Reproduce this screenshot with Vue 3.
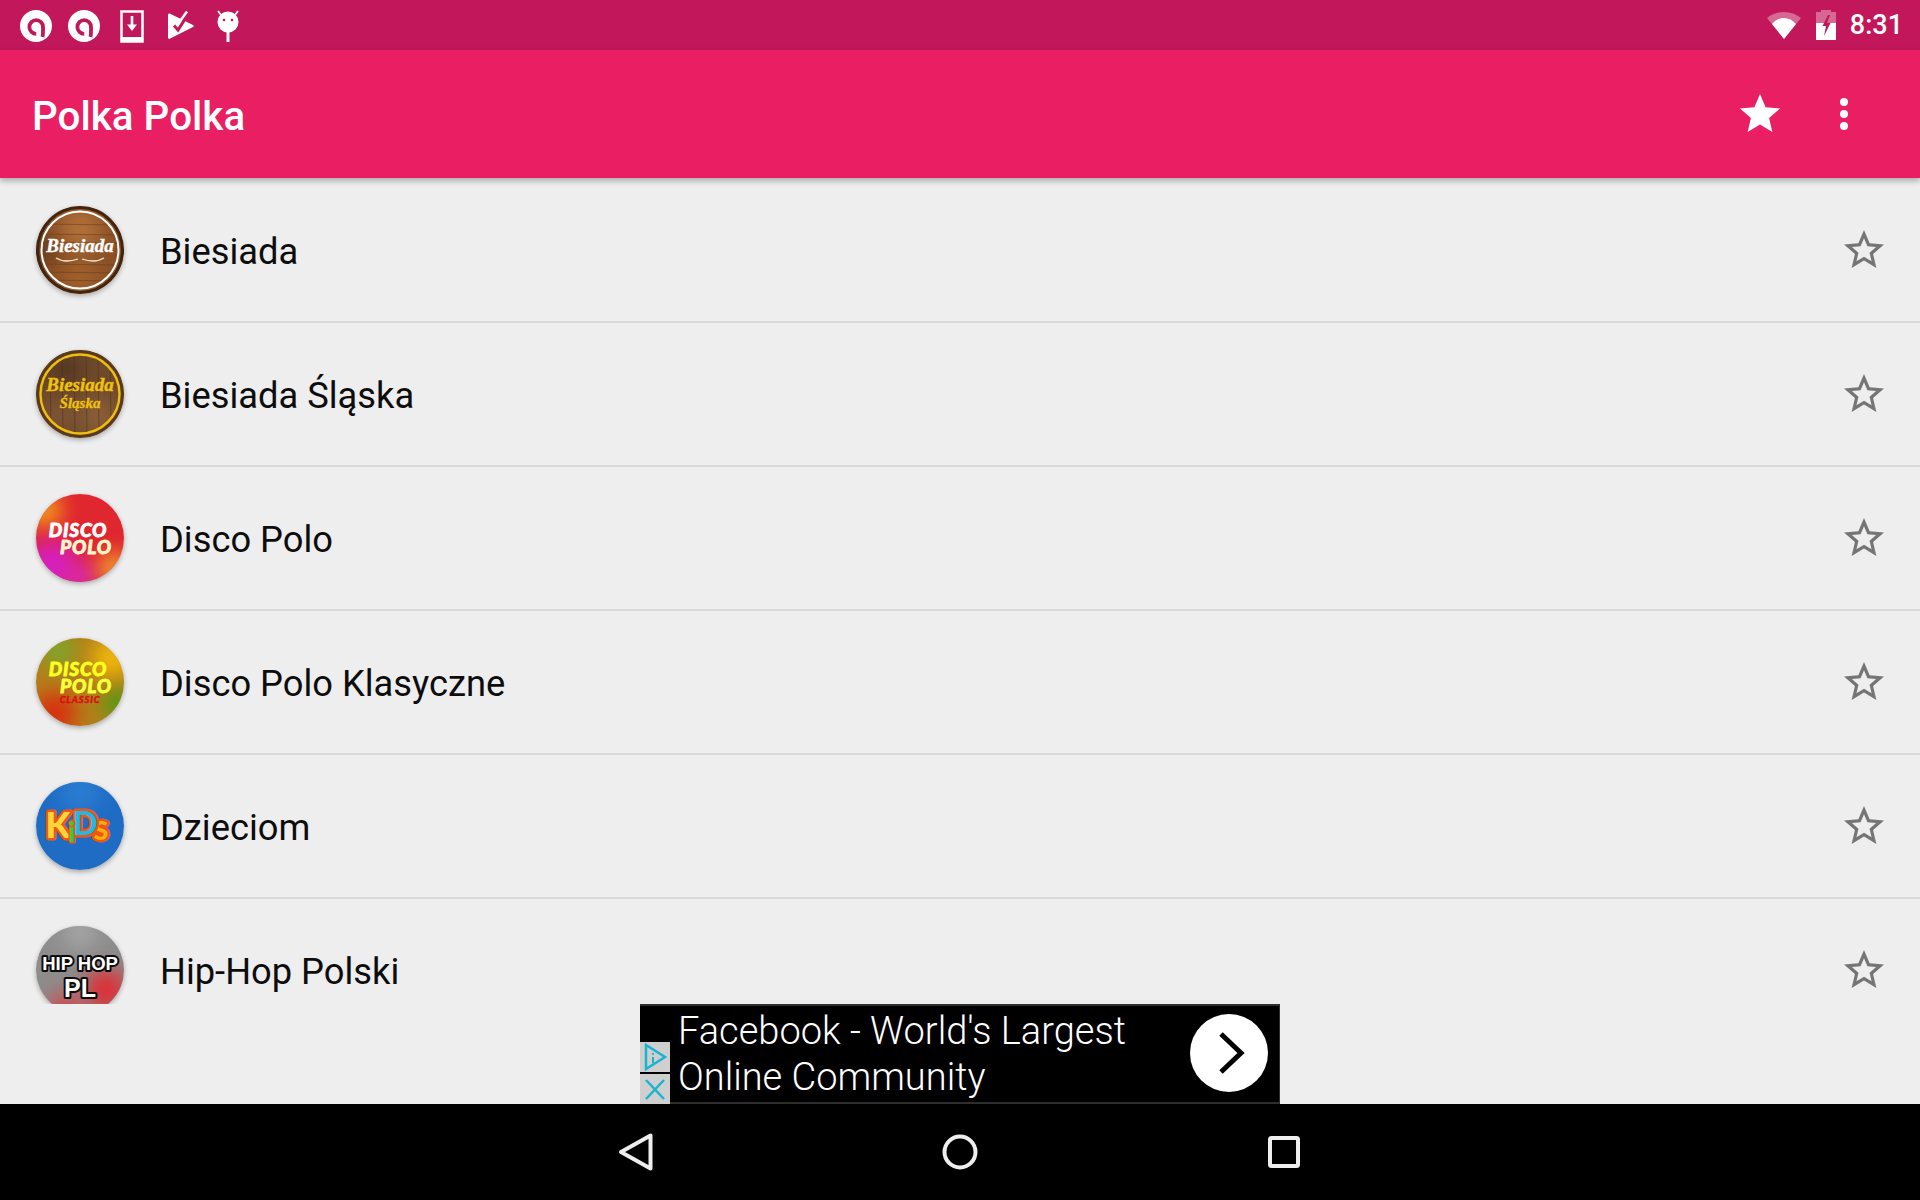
<script setup>
const starOutline =
  'M22 9.24l-7.19-.62L12 2 9.19 8.63 2 9.24l5.46 4.73L5.82 21 12 17.27 18.18 21l-1.63-7.03L22 9.24zM12 15.4l-3.76 2.27 1-4.28-3.32-2.88 4.38-.38L12 6.1l1.71 4.04 4.38.38-3.32 2.88 1 4.28L12 15.4z'
const starFilled =
  'M12 17.27L18.18 21l-1.64-7.03L22 9.24l-7.19-.61L12 2 9.19 8.63 2 9.24l5.46 4.73L5.82 21z'

const stations = [
  {
    name: 'Biesiada',
    base: '#8a5026',
    blobs: [
      { cx: 44, cy: 24, r: 22, fill: '#b0703a' },
      { cx: 44, cy: 70, r: 20, fill: '#a0602c' },
      { cx: 6, cy: 44, r: 12, fill: '#5d3317' },
    ],
    planks: [18, 28, 36, 58, 66, 74].map((y) => ({ x1: 0, y1: y, x2: 88, y2: y + 1, stroke: '#6b3b19' })),
    rings: [
      { r: 42.5, stroke: '#3f2512', width: 3 },
      { r: 38.5, stroke: '#ffffff', width: 2 },
    ],
    flourish: 'M20 52c8 5 16 3 22 1M68 52c-8 5-16 3-22 1',
    flourishColor: '#f4e8dc',
    labels: [{ text: 'Biesiada', x: 44, y: 46, size: 19, fill: '#fff', sw: 0.4, cls: 'script' }],
  },
  {
    name: 'Biesiada Śląska',
    base: '#6f4a2b',
    blobs: [
      { cx: 30, cy: 20, r: 14, fill: '#4c3220' },
      { cx: 62, cy: 66, r: 20, fill: '#8a5f39' },
      { cx: 22, cy: 66, r: 14, fill: '#83593a' },
    ],
    planks: [14, 26, 38, 50, 62, 74].map((x) => ({ x1: x, y1: 0, x2: x + 1, y2: 88, stroke: '#4d311d' })),
    rings: [
      { r: 42.5, stroke: '#5a3a1c', width: 3 },
      { r: 39.5, stroke: '#eebf0c', width: 2.4 },
    ],
    labels: [
      { text: 'Biesiada', x: 44, y: 41, size: 19, fill: '#efc20c', sw: 0.4, cls: 'script' },
      { text: 'Śląska', x: 44, y: 58, size: 15, fill: '#efc20c', sw: 0.3, cls: 'script' },
    ],
  },
  {
    name: 'Disco Polo',
    base: '#e0262f',
    blobs: [
      { cx: 8, cy: 16, r: 18, fill: '#f09a1c' },
      { cx: 16, cy: 72, r: 26, fill: '#d61fc0' },
      { cx: 44, cy: 84, r: 16, fill: '#d92bb0' },
      { cx: 78, cy: 74, r: 16, fill: '#f0a030' },
    ],
    labels: [
      { text: 'DISCO', x: 42, y: 43, size: 19, fill: '#fff', sw: 0.8, cls: 'heavy' },
      { text: 'POLO', x: 50, y: 60, size: 19, fill: '#fff7c8', sw: 0.8, cls: 'heavy' },
    ],
  },
  {
    name: 'Disco Polo Klasyczne',
    base: '#b4801a',
    blobs: [
      { cx: 22, cy: 12, r: 18, fill: '#7fa52c' },
      { cx: 76, cy: 20, r: 20, fill: '#f0b80c' },
      { cx: 18, cy: 76, r: 22, fill: '#d8300f' },
      { cx: 82, cy: 66, r: 14, fill: '#3ea012' },
    ],
    labels: [
      { text: 'DISCO', x: 42, y: 38, size: 19, fill: '#ffff1e', sw: 0.8, cls: 'heavy' },
      { text: 'POLO', x: 50, y: 55, size: 19, fill: '#f6ff3c', sw: 0.8, cls: 'heavy' },
      { text: 'CLASSIC', x: 44, y: 65, size: 9.5, fill: '#d81010', sw: 0.4, cls: 'heavy' },
    ],
  },
  {
    name: 'Dzieciom',
    base: '#1f6cc4',
    blobs: [{ cx: 44, cy: 10, r: 20, fill: '#2a7ed2' }],
    labels: [
      { text: 'K', x: 22, y: 56, size: 36, fill: '#ffd63a', stroke: '#f0560f', sw: 5, cls: 'kids' },
      { text: 'S', x: 65, y: 58, size: 27, fill: '#ffb010', stroke: '#f0560f', sw: 5, cls: 'kids' },
      { text: 'D', x: 49, y: 53, size: 33, fill: '#20b8ea', stroke: '#f0560f', sw: 5, cls: 'kids' },
      { text: 'i', x: 36, y: 60, size: 28, fill: '#39c83c', stroke: '#f0560f', sw: 3, cls: 'kids' },
    ],
  },
  {
    name: 'Hip-Hop Polski',
    base: '#8d8d8d',
    blobs: [
      { cx: 44, cy: 6, r: 18, fill: '#a4a4a4' },
      { cx: 70, cy: 64, r: 22, fill: '#dc3036' },
      { cx: 30, cy: 84, r: 18, fill: '#d2474a' },
    ],
    labels: [
      { text: 'HIP HOP', x: 44, y: 44, size: 18.5, fill: '#fff', stroke: '#0c0c0c', sw: 4, cls: 'tag' },
      { text: 'PL', x: 44, y: 71, size: 25, fill: '#fff', stroke: '#0c0c0c', sw: 4, cls: 'tag' },
    ],
  },
]
</script>

<template>
  <div class="screen">
    <header class="status-bar">
      <div class="status-icons">
        <svg v-for="n in 2" :key="n" class="status-icon" viewBox="0 0 48 48">
          <circle cx="24" cy="25" r="16" fill="#fff" />
          <path
            d="M30.500 36c.8-3 .5-6 .5-10a6.800 6.800 0 1 0-6.800 6.800"
            fill="none"
            stroke="#c2185b"
            stroke-width="3.800"
          />
        </svg>
        <svg class="status-icon" viewBox="0 0 48 48">
          <path d="M13.500 10.500h21v30h-21z" fill="none" stroke="#fff" stroke-width="2.500" />
          <path d="M13 36h22v5H13z" fill="#fff" />
          <path d="M22.700 15h2.600v8.500H29L24 30l-5-6.500h3.700z" fill="#fff" />
        </svg>
        <svg class="status-icon" viewBox="0 0 48 48">
          <path
            d="M12 14c0-1.500 1-2 2.200-1.300L37 24c1 .6 1 1.500 0 2L14.200 37.600C13 38.300 12 37.800 12 36.500z"
            fill="#fff"
          />
          <path d="M18 24.500l4 4.500 9-14" fill="none" stroke="#c2185b" stroke-width="3" />
          <path d="M22 11l1 5 6-6 3 5-6 6" fill="#c2185b" />
          <path d="M24.500 19.500l6.500-9" fill="none" stroke="#fff" stroke-width="2.500" />
        </svg>
        <svg class="status-icon" viewBox="0 0 48 48">
          <circle cx="24" cy="21" r="10.500" fill="#fff" />
          <path d="M22.500 30h3v11h-3z" fill="#fff" />
          <path d="M17 14l-3-4M31 14l3-4" stroke="#fff" stroke-width="1.800" />
          <circle cx="20" cy="19" r="1.300" fill="#c2185b" />
          <circle cx="28" cy="19" r="1.300" fill="#c2185b" />
        </svg>
      </div>
      <div class="status-right">
        <svg class="wifi" viewBox="0 0 36 30">
          <path d="M18 29L1 8C6 4 11.500 2 18 2s12 2 17 6z" fill="#fff" fill-opacity=".35" />
          <path d="M18 29L6 14C9.500 10 13.500 8 18 8s8.500 2 12 6z" fill="#fff" />
        </svg>
        <svg class="battery" viewBox="0 0 20 30">
          <path d="M5 0h10v2h5v11H0V2h5z" fill="#fff" fill-opacity=".35" />
          <path d="M0 13h20v17H0z" fill="#fff" />
          <path d="M12 5L6.500 16H10L8 26l6.500-13H11l3-8z" fill="#c2185b" />
        </svg>
        <span class="clock">8:31</span>
      </div>
    </header>

    <div class="toolbar">
      <h1 class="title">Polka Polka</h1>
      <div class="toolbar-actions">
        <svg class="toolbar-star" viewBox="0 0 24 24"><path :d="starFilled" fill="#fff" /></svg>
        <div class="overflow-menu"><i></i><i></i><i></i></div>
      </div>
    </div>

    <main class="list">
      <div v-for="station in stations" :key="station.name" class="row">
        <svg class="logo" viewBox="0 0 88 88">
          <rect width="88" height="88" :fill="station.base" />
          <circle v-for="(b, i) in station.blobs" :key="i" class="blob" v-bind="b" />
          <line v-for="(p, i) in station.planks" :key="'p' + i" class="plank" v-bind="p" />
          <circle
            v-for="(ring, i) in station.rings"
            :key="'r' + i"
            cx="44"
            cy="44"
            :r="ring.r"
            fill="none"
            :stroke="ring.stroke"
            :stroke-width="ring.width"
          />
          <path
            v-if="station.flourish"
            :d="station.flourish"
            fill="none"
            :stroke="station.flourishColor"
            stroke-width="1.300"
          />
          <text
            v-for="label in station.labels"
            :key="label.text"
            :class="label.cls"
            :x="label.x"
            :y="label.y"
            :font-size="label.size"
            :fill="label.fill"
            :stroke="label.stroke || label.fill"
            :stroke-width="label.sw"
            text-anchor="middle"
          >{{ label.text }}</text>
        </svg>
        <span class="station-name">{{ station.name }}</span>
        <svg class="fav" viewBox="0 0 24 24"><path :d="starOutline" fill="#757575" /></svg>
      </div>
    </main>

    <div class="ad-slot">
      <div class="ad">
        <div class="ad-badges">
          <div class="ad-badge">
            <svg viewBox="0 0 30 30" width="30" height="30">
              <path d="M6 3l19 12L6 27z" fill="none" stroke="#19b5d0" stroke-width="2.500" />
              <path d="M13 11v1.800M13 15v6" stroke="#19b5d0" stroke-width="2" />
            </svg>
          </div>
          <div class="ad-badge">
            <svg viewBox="0 0 30 30" width="30" height="30">
              <path d="M6 6l18 19M24 6L6 25" stroke="#19b5d0" stroke-width="2.500" />
            </svg>
          </div>
        </div>
        <div class="ad-text">Facebook - World's Largest<br />Online Community</div>
        <div class="ad-button">
          <svg viewBox="0 0 78 78" width="78" height="78">
            <path d="M31 20l20 19-20 19" fill="none" stroke="#000" stroke-width="5" />
          </svg>
        </div>
      </div>
    </div>

    <nav class="nav-bar">
      <svg class="nav-icon" viewBox="0 0 48 48">
        <path d="M38.500 7.500v33L9 24z" fill="none" stroke="#eee" stroke-width="4" stroke-linejoin="round" />
      </svg>
      <svg class="nav-icon" viewBox="0 0 48 48">
        <circle cx="24" cy="24" r="15.500" fill="none" stroke="#eee" stroke-width="4" />
      </svg>
      <svg class="nav-icon" viewBox="0 0 48 48">
        <rect x="10" y="10" width="28" height="28" rx="1.500" fill="none" stroke="#eee" stroke-width="4" />
      </svg>
    </nav>
  </div>
</template>

<style scoped>
.screen {
  display: flex;
  flex-direction: column;
  width: 1920px;
  height: 1200px;
  overflow: hidden;
  background: #eeeeee;
  font-family: Roboto, "Liberation Sans", sans-serif;
}

.status-bar {
  display: flex;
  flex: none;
  justify-content: space-between;
  align-items: center;
  height: 50px;
  padding: 0 17px 0 12px;
  background: #c2185b;
}
.status-icons {
  display: flex;
}
.status-icon {
  display: block;
  width: 48px;
  height: 48px;
}
.status-right {
  display: flex;
  align-items: center;
}
.wifi {
  width: 36px;
  height: 30px;
  margin-right: 14px;
}
.battery {
  width: 20px;
  height: 30px;
  margin-right: 14px;
}
.clock {
  color: #fff;
  font-size: 27px;
  font-weight: 500;
  line-height: 50px;
}

.toolbar {
  position: relative;
  z-index: 2;
  display: flex;
  flex: none;
  justify-content: space-between;
  align-items: center;
  height: 128px;
  padding: 0 72px 0 32px;
  background: #e91e63;
  box-shadow: 0 3px 6px rgba(0, 0, 0, 0.28);
}
.title {
  margin: 4px 0 0;
  color: #fff;
  font-size: 40.4px;
  font-weight: 500;
}
.toolbar-actions {
  display: flex;
  align-items: center;
}
.toolbar-star {
  width: 48px;
  height: 48px;
  margin-right: 56px;
}
.overflow-menu {
  display: flex;
  flex-direction: column;
  gap: 4px;
  width: 8px;
}
.overflow-menu i {
  width: 8px;
  height: 8px;
  border-radius: 50%;
  background: #fff;
}

.list {
  flex: 1;
  min-height: 0;
  padding-top: 1px;
  overflow: hidden;
}
.row {
  display: flex;
  box-sizing: border-box;
  align-items: center;
  height: 144px;
  padding: 0 32px 0 36px;
  border-bottom: 2px solid #d9d9d9;
}
.logo {
  flex: none;
  width: 88px;
  height: 88px;
  margin-right: 36px;
  border-radius: 50%;
  box-shadow: 0 2px 5px rgba(0, 0, 0, 0.3);
}
.logo text {
  paint-order: stroke;
  stroke-linejoin: round;
}
.blob {
  filter: blur(10px);
}
.plank {
  stroke-width: 1;
  opacity: 0.55;
}
.script {
  font-family: "Liberation Serif", serif;
  font-style: italic;
  font-weight: 700;
}
.heavy {
  font-family: Lato, "Liberation Sans", sans-serif;
  font-style: italic;
  font-weight: 900;
  letter-spacing: 0.8px;
}
.kids {
  font-family: Lato, "Liberation Sans", sans-serif;
  font-weight: 900;
}
.tag {
  font-family: "Liberation Sans", sans-serif;
  font-weight: 700;
}
.station-name {
  flex: 1;
  padding-top: 3px;
  color: #0d0d0d;
  font-size: 36.3px;
}
.fav {
  flex: none;
  width: 48px;
  height: 48px;
}

.ad-slot {
  display: flex;
  flex: none;
  justify-content: center;
  height: 100px;
}
.ad {
  display: flex;
  box-sizing: border-box;
  width: 640px;
  height: 100px;
  border: solid #2e2e2e;
  border-width: 2px 1px 2px 0;
  background: #000;
}
.ad-badges {
  display: flex;
  flex-direction: column;
  justify-content: flex-end;
  gap: 2px;
  width: 30px;
  margin-bottom: -2px;
}
.ad-badge {
  height: 30px;
  background: #cfcfcf;
}
.ad-badge svg {
  display: block;
}
.ad-text {
  flex: 1;
  padding: 2px 0 0 8px;
  color: #fff;
  font-size: 38px;
  font-weight: 300;
  line-height: 46px;
  white-space: nowrap;
}
.ad-button {
  flex: none;
  width: 78px;
  height: 78px;
  margin: 8px 11px 0 0;
  border-radius: 50%;
  background: #fff;
}

.nav-bar {
  position: relative;
  display: flex;
  flex: none;
  justify-content: center;
  align-items: center;
  gap: 276px;
  height: 96px;
  background: #000;
}
.nav-icon {
  width: 48px;
  height: 48px;
}
</style>
